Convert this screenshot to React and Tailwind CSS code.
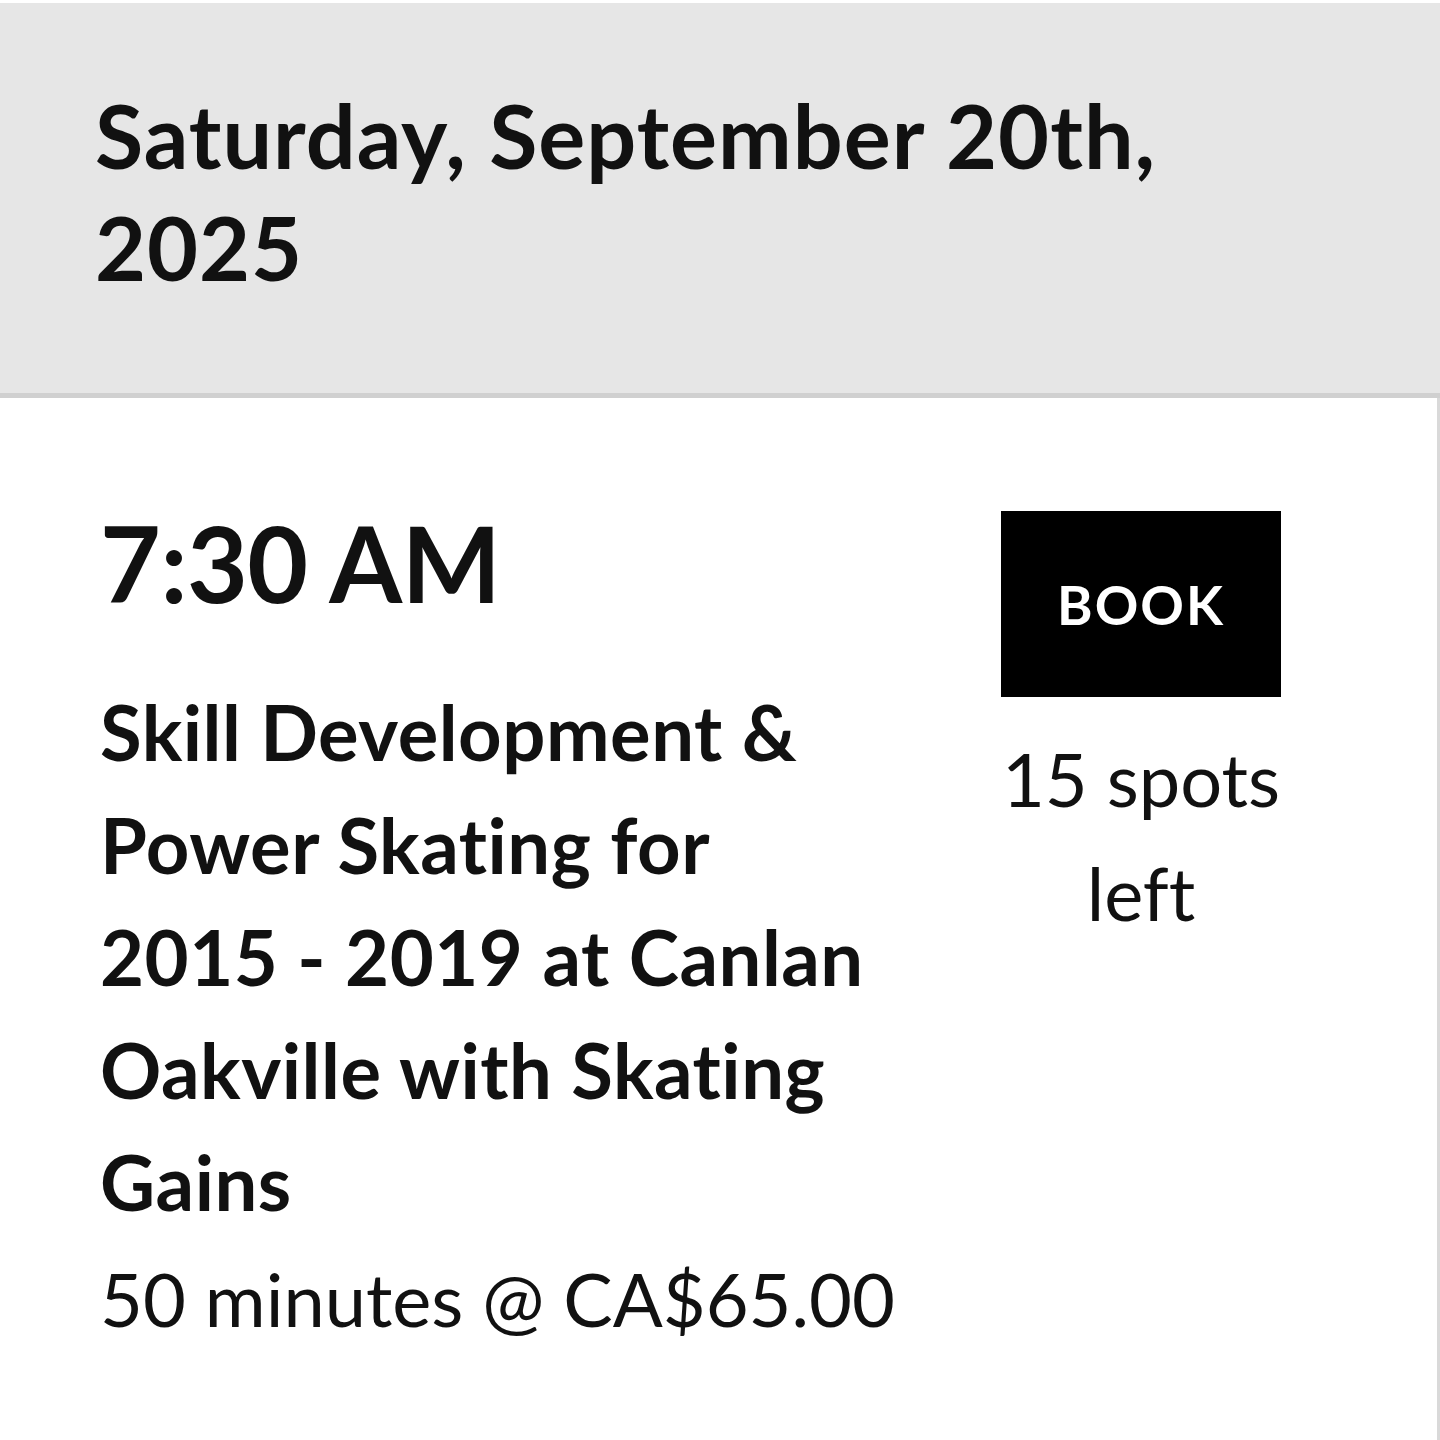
export default function App() {
  return (
    <div className="w-[1440px] h-[1440px] bg-white text-[#111111] font-['Lato',sans-serif] [font-variant-ligatures:none] overflow-hidden">
      <div className="mt-[3px] h-[395px] bg-[#e6e6e6] border-b-[5px] border-[#d0d0d0] pl-[95px] pt-[76px]">
        <h1 className="text-[88px] leading-[112px] font-bold tracking-[1px] w-[1200px]">
          Saturday, September 20th, 2025
        </h1>
      </div>
      <div className="h-[1042px] border-r-[3px] border-[#d9d9d9] flex pl-[100px] pr-[156px] pt-[97px]">
        <div className="flex-1">
          <div className="text-[105px] leading-[134px] font-bold tracking-[-0.5px]">7:30 AM</div>
          <div className="mt-[47px] w-[775px] text-[76px] leading-[112.5px] font-bold tracking-[0.5px]">
            Skill Development &amp; Power Skating for 2015 - 2019 at Canlan Oakville with Skating Gains
          </div>
          <div className="mt-[4px] text-[74px] leading-[112px] whitespace-nowrap">50 minutes @ CA$65.00</div>
        </div>
        <div className="w-[280px] flex flex-col items-center">
          <button className="mt-[16px] w-[280px] h-[186px] bg-black text-white text-[54px] font-bold tracking-[2px]">
            BOOK
          </button>
          <div className="mt-[25px] text-[74px] leading-[114px] text-center">15 spots left</div>
        </div>
      </div>
    </div>
  );
}
